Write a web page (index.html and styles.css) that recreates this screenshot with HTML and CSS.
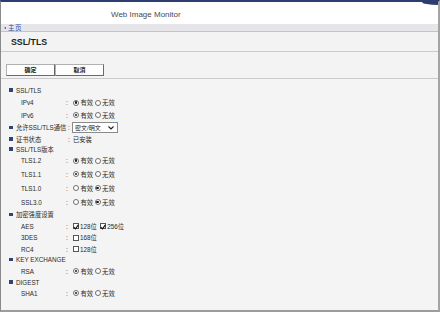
FILE: index.html
```html
<!DOCTYPE html>
<html lang="zh">
<head>
<meta charset="utf-8">
<title>SSL/TLS</title>
<link rel="stylesheet" href="styles.css">
</head>
<body>
<div class="frame">
  <header class="top">
    <span class="app">Web Image Monitor</span>
    <span class="corner"></span>
  </header>
  <nav class="crumb"><span class="tri"></span><a class="home">主页</a></nav>
  <div class="title"><h1>SSL/TLS</h1></div>
  <div class="actions">
    <button class="btn">确定</button><button class="btn">取消</button>
  </div>
  <div class="content">
    <div class="row sec r12"><span class="bullet"></span><span class="lbl">SSL/TLS</span></div>
    <div class="row sub r13"><span class="lbl">IPv4</span><span class="colon">:</span><span class="radio on"></span><span class="opt">有效</span><span class="radio"></span><span class="opt">无效</span></div>
    <div class="row sub r12"><span class="lbl">IPv6</span><span class="colon">:</span><span class="radio on"></span><span class="opt">有效</span><span class="radio"></span><span class="opt">无效</span></div>
    <div class="row sec r13"><span class="bullet"></span><span class="lbl wide">允许SSL/TLS通信</span><span class="colon">:</span><span class="select"><span class="sv">密文/明文</span><svg class="chev" width="6" height="4" viewBox="0 0 6 4"><path d="M0.5 0.5 L3 3 L5.5 0.5" fill="none" stroke="#222" stroke-width="1.2"/></svg></span></div>
    <div class="row sec r10"><span class="bullet"></span><span class="lbl wide">证书状态</span><span class="colon">:</span><span class="val">已安装</span></div>
    <div class="row sec r10"><span class="bullet"></span><span class="lbl">SSL/TLS版本</span></div>
    <div class="row sub r13"><span class="lbl">TLS1.2</span><span class="colon">:</span><span class="radio on"></span><span class="opt">有效</span><span class="radio"></span><span class="opt">无效</span></div>
    <div class="row sub r14"><span class="lbl">TLS1.1</span><span class="colon">:</span><span class="radio on"></span><span class="opt">有效</span><span class="radio"></span><span class="opt">无效</span></div>
    <div class="row sub r14"><span class="lbl">TLS1.0</span><span class="colon">:</span><span class="radio"></span><span class="opt">有效</span><span class="radio on"></span><span class="opt">无效</span></div>
    <div class="row sub r14"><span class="lbl">SSL3.0</span><span class="colon">:</span><span class="radio"></span><span class="opt">有效</span><span class="radio on"></span><span class="opt">无效</span></div>
    <div class="row sec r11"><span class="bullet"></span><span class="lbl">加密强度设置</span></div>
    <div class="row sub r12"><span class="lbl">AES</span><span class="colon">:</span><span class="check on"><svg width="6" height="6" viewBox="0 0 6 6"><path d="M0.8 3 L2.4 4.8 L5.4 0.8" fill="none" stroke="#111" stroke-width="1.1"/></svg></span><span class="opt">128位</span><span class="check on"><svg width="6" height="6" viewBox="0 0 6 6"><path d="M0.8 3 L2.4 4.8 L5.4 0.8" fill="none" stroke="#111" stroke-width="1.1"/></svg></span><span class="opt">256位</span></div>
    <div class="row sub r11"><span class="lbl">3DES</span><span class="colon">:</span><span class="check"></span><span class="opt">168位</span></div>
    <div class="row sub r12"><span class="lbl">RC4</span><span class="colon">:</span><span class="check"></span><span class="opt">128位</span></div>
    <div class="row sec r9"><span class="bullet"></span><span class="lbl">KEY EXCHANGE</span></div>
    <div class="row sub r14"><span class="lbl">RSA</span><span class="colon">:</span><span class="radio on"></span><span class="opt">有效</span><span class="radio"></span><span class="opt">无效</span></div>
    <div class="row sec r8"><span class="bullet"></span><span class="lbl">DIGEST</span></div>
    <div class="row sub r14"><span class="lbl">SHA1</span><span class="colon">:</span><span class="radio on"></span><span class="opt">有效</span><span class="radio"></span><span class="opt">无效</span></div>
  </div>
</div>
</body>
</html>
```
FILE: styles.css
```css
* { box-sizing: border-box; }
html, body { margin: 0; padding: 0; }
body {
  width: 440px;
  height: 312px;
  overflow: hidden;
  font-family: "Liberation Sans", "Noto Sans CJK SC", sans-serif;
  background: #f4f4f4;
}
.frame {
  width: 440px;
  height: 312px;
  display: flex;
  flex-direction: column;
  border-top: 2px solid #2e3d70;
  border-left: 1px solid #8a8a8a;
  border-right: 2px solid #a4a4a4;
  border-bottom: 2px solid #9c9c9c;
  background: #f4f4f4;
}
.top {
  position: relative;
  height: 22px;
  background: #fff;
  display: flex;
  align-items: center;
  padding-left: 110px;
  padding-top: 3px;
}
.app {
  font-size: 8px;
  color: #4a4a4a;
}
.corner {
  position: absolute;
  top: 0;
  right: 0;
  width: 16px;
  height: 3px;
  background: #2e3d70;
  border-bottom-left-radius: 16px 3px;
}
.crumb {
  height: 8px;
  background: #e6e6ea;
  border-bottom: 1px solid #c4c4c8;
  display: flex;
  align-items: center;
  padding-left: 3px;
}
.tri {
  width: 0;
  height: 0;
  border-top: 1.5px solid transparent;
  border-bottom: 1.5px solid transparent;
  border-right: 2px solid #2a4aa0;
  margin-right: 2px;
}
.home {
  font-size: 6.5px;
  line-height: 7px;
  color: #2a4aa0;
  letter-spacing: 0.5px;
}
.title {
  height: 20px;
  background: #f3f3f3;
  border-bottom: 1px solid #cacaca;
  display: flex;
  align-items: center;
  padding-left: 10px;
}
.title h1 {
  margin: 0;
  font-size: 8.8px;
  font-weight: bold;
  color: #1e1e1e;
}
.actions {
  height: 27px;
  background: #f3f3f3;
  border-bottom: 1px solid #cacaca;
  padding-top: 12px;
  padding-left: 5px;
  display: flex;
  align-items: flex-start;
}
.btn {
  width: 49px;
  height: 12px;
  margin: 0;
  padding: 0;
  background: #fdfdfd;
  border: 1px solid #6a6a6a;
  border-top-color: #b0b0b0;
  border-left-color: #b0b0b0;
  font-family: "Liberation Sans", "Noto Sans CJK SC", sans-serif;
  font-size: 6px;
  font-weight: bold;
  color: #222;
  line-height: 10px;
}
.content {
  flex: 1;
  padding-top: 5px;
  background: #f4f4f4;
  font-size: 6.3px;
  color: #2a2a2a;
}
.row {
  display: flex;
  align-items: center;
  white-space: nowrap;
}
.r8 { height: 8px; }
.r9 { height: 9px; }
.r10 { height: 10px; }
.r11 { height: 11px; }
.r12 { height: 12px; }
.r13 { height: 13px; }
.r14 { height: 14px; }
.sec { padding-left: 8px; }
.sub { padding-left: 20px; }
.bullet {
  width: 3.5px;
  height: 3.5px;
  background: #2e4478;
  margin-right: 3.5px;
  flex: none;
}
.sub .lbl { width: 45px; }
.sec .lbl.wide { width: 52px; }
.colon {
  width: 5px;
  flex: none;
}
.radio {
  width: 6px;
  height: 6px;
  border-radius: 50%;
  border: 1px solid #6e6e6e;
  background: #fff;
  margin-left: 2px;
  margin-right: 1.5px;
  display: flex;
  align-items: center;
  justify-content: center;
  flex: none;
}
.radio.on::after {
  content: "";
  width: 2.5px;
  height: 2.5px;
  border-radius: 50%;
  background: #1a1a1a;
}
.opt + .radio { margin-left: 1.5px; }
.check {
  width: 6px;
  height: 6px;
  border: 1px solid #555;
  background: #fff;
  margin-left: 1.5px;
  margin-right: 1.5px;
  display: flex;
  flex: none;
  position: relative;
}
.check svg {
  position: absolute;
  left: -0.5px;
  top: -0.5px;
}
.opt + .check { margin-left: 3px; }
.opt { color: #2a2a2a; }
.val { color: #2a2a2a; }
.select {
  width: 46px;
  height: 11px;
  background: #fff;
  border: 1px solid #8a8a8a;
  display: flex;
  align-items: center;
  justify-content: space-between;
  padding: 0 3px 0 2px;
  margin-left: -1px;
}
.sv { font-size: 6px; color: #222; }
.chev { flex: none; }
```
